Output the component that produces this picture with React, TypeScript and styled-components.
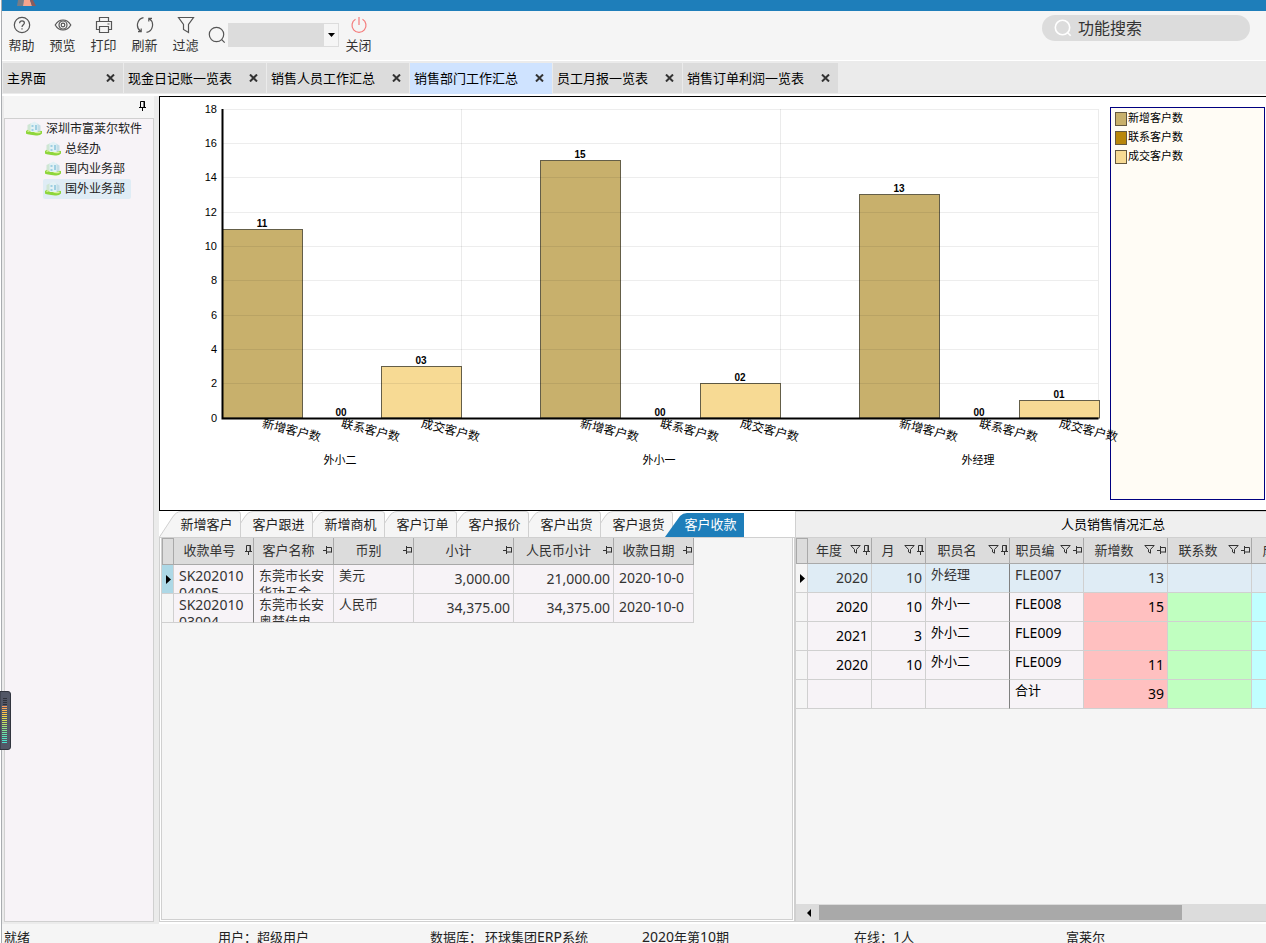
import React from 'react';
import styled, { createGlobalStyle, css } from 'styled-components';

const GlobalStyle = createGlobalStyle`
  *, *::before, *::after { box-sizing: border-box; }
  body {
    margin: 0;
    background: #fff;
    color: #222;
    font: 13px/18px 'Noto Sans CJK SC', sans-serif;
  }
  button, input, select { font: inherit; color: inherit; }
`;

const Shell = styled.div`
  height: 100vh;
  display: flex;
  flex-direction: column;
  overflow: hidden;
  margin-left: 1px;
  border-left: 1px solid #a9acb0;
`;

const TitleBar = styled.header`
  flex: none;
  height: 11px;
  padding-left: 14px;
  background: #1e7eba;
  svg { display: block; }
`;

const Toolbar = styled.div`
  flex: none;
  height: 50px;
  display: flex;
  align-items: flex-start;
  background: #f5f5f5;
  border-bottom: 1px solid #fff;
`;

const ToolButton = styled.button`
  width: 41px;
  height: 48px;
  padding: 5px 2px 0 0;
  border: 0;
  background: none;
  display: flex;
  flex-direction: column;
  align-items: center;
  gap: 2px;
  white-space: nowrap;
  color: #333;
`;

const QuickFind = styled.div`
  display: flex;
  align-items: center;
  gap: 2px;
  padding: 12px 0 0 1px;
`;

const Combo = styled.label`
  position: relative;
  display: flex;
  svg { position: absolute; right: 0; top: 0; pointer-events: none; }
`;

const ComboSelect = styled.select`
  appearance: none;
  width: 111px;
  height: 24px;
  padding: 0 16px 0 4px;
  border: 1px solid #dcdcdc;
  border-radius: 0;
  background: #dcdcdc;
`;

const FeatureSearch = styled.label`
  display: flex;
  align-items: center;
  gap: 6px;
  width: 208px;
  height: 26px;
  margin: 4px 16px 0 auto;
  padding: 0 14px 0 12px;
  border-radius: 13px;
  background: #dcdcdc;
  svg { flex: none; }
`;

const FeatureInput = styled.input`
  min-width: 0;
  flex: 1;
  height: 26px;
  padding: 0 0 2px;
  border: 0;
  outline: 0;
  background: none;
  font-size: 16px;
  &::placeholder { color: #333; opacity: 1; }
`;

const PageTabs = styled.nav`
  flex: none;
  display: flex;
  gap: 1px;
  height: 35px;
  padding: 2px 0 1px 1px;
  background: #ebebeb;
  border-bottom: 2px solid #fff;
`;

const PageTab = styled.div<{ $active?: boolean }>`
  display: flex;
  align-items: center;
  justify-content: space-between;
  gap: 13px;
  height: ${p => (p.$active ? 31 : 30)}px;
  min-width: 120px;
  padding: 0 4px ${p => (p.$active ? 1 : 0)}px;
  background: ${p => (p.$active ? '#cfe3ff' : '#dcdcdc')};
`;

const PlainButton = styled.button`
  display: flex;
  padding: 0;
  border: 0;
  background: none;
  color: #000;
  white-space: nowrap;
`;

const CloseButton = styled(PlainButton)`
  padding: 4px;
`;

const Workspace = styled.div`
  flex: 1;
  min-height: 0;
  display: flex;
  background: #ebebeb;
`;

const Sidebar = styled.aside`
  flex: none;
  width: 157px;
  padding: 0 5px 2px 2px;
  display: flex;
  flex-direction: column;
`;

const SidebarHead = styled.div`
  flex: none;
  display: flex;
  justify-content: flex-end;
  align-items: center;
  height: 22px;
  padding: 0 8px 2px 0;
  background: #f5f5f5;
`;

const Tree = styled.ul`
  flex: 1;
  margin: 0;
  padding: 0;
  list-style: none;
  background: #f7f3f7;
  border: 1px solid #d0d0d0;
  font-size: 12px;
`;

const TreeItem = styled.li<{ $level: number }>`
  display: flex;
  padding-left: ${p => 19 + p.$level * 19}px;
`;

const TreeLabel = styled.button<{ $selected?: boolean }>`
  display: flex;
  align-items: center;
  gap: 4px;
  height: 20px;
  padding: 0 6px 2px 2px;
  border: 0;
  border-radius: 2px;
  white-space: nowrap;
  background: ${p => (p.$selected ? '#dfecf5' : 'none')};
`;

const Main = styled.main`
  flex: 1;
  min-width: 0;
  display: flex;
  flex-direction: column;
  background: #fff;
`;

const ChartPanel = styled.section`
  flex: none;
  display: flex;
  justify-content: space-between;
  height: 415px;
  border: 1px solid #000;
  border-right: 0;
  overflow: hidden;
  svg { display: block; flex: none; position: relative; overflow: visible; }
`;

const Legend = styled.ul`
  flex: none;
  width: 155px;
  margin: 10px 1px 10px 0;
  padding: 1px 4px;
  list-style: none;
  border: 1px solid #000080;
  background: #fffcf5;
  color: #000;
  font-size: 11px;
`;

const LegendItem = styled.li`
  display: flex;
  align-items: flex-start;
  gap: 1px;
  height: 19px;
  line-height: 16px;
`;

const Swatch = styled.span<{ $color: string }>`
  width: 12px;
  height: 14px;
  margin-top: 3px;
  border: 1px solid #645840;
  background: ${p => p.$color};
`;

const Lower = styled.div`
  flex: 1;
  min-height: 0;
  display: flex;
`;

const DetailPanel = styled.section`
  flex: none;
  width: 636px;
  display: flex;
  flex-direction: column;
  padding-bottom: 2px;
`;

const DetailTabs = styled.div`
  flex: none;
  display: flex;
  height: 26px;
`;

const DetailTab = styled.button<{ $order: number; $active?: boolean }>`
  position: relative;
  z-index: ${p => p.$order};
  flex: none;
  width: 82px;
  height: 26px;
  margin-right: -10px;
  padding: 0 0 0 13px;
  border: 0;
  background: none;
  color: ${p => (p.$active ? '#fff' : '#222')};
  svg { position: absolute; left: 0; top: 0; z-index: -1; }
`;

const DetailFrame = styled.div`
  flex: 1;
  min-height: 0;
  border: 1px solid #d0d0d0;
  padding: 0 1px 1px;
  background: #fff;
`;

const DetailBody = styled.div`
  height: 100%;
  border: 1px solid #d0d0d0;
  border-top: 0;
  background: #f5f5f5;
  overflow: hidden;
`;

const SummaryPanel = styled.section`
  flex: 1;
  min-width: 0;
  display: flex;
  flex-direction: column;
  border: solid #d0d0d0;
  border-width: 1px 0 1px 1px;
  margin-bottom: 2px;
  background: #f5f5f5;
`;

const SummaryTitle = styled.h2`
  flex: none;
  height: 26px;
  margin: 0;
  padding-left: 164px;
  border-bottom: 1px solid #d0d0d0;
  background: #efefef;
  color: #000;
  font-size: 13px;
  line-height: 24px;
  font-weight: 400;
  text-align: center;
`;

const GridScroll = styled.div`
  flex: 1;
  min-height: 0;
  overflow: hidden;
`;

const Grid = styled.table<{ $w: number }>`
  width: ${p => p.$w}px;
  table-layout: fixed;
  border-collapse: separate;
  border-spacing: 0;
`;

const HeadCell = styled.th<{ $w: number; $h: number; $box?: boolean }>`
  width: ${p => p.$w}px;
  height: ${p => p.$h}px;
  padding: 0 1px 2px 3px;
  border: 1px solid #a9a9a9;
  border-width: ${p => (p.$box ? '1px' : '0 1px 1px 0')};
  background: #dcdcdc;
  color: #333;
  font-weight: 400;
`;

const HeadContent = styled.div`
  display: flex;
  align-items: center;
  gap: 3px;
  white-space: nowrap;
  overflow: hidden;
`;

const HeadText = styled.span`
  flex: 1;
  text-align: center;
`;

const HeadPins = styled.span`
  flex: none;
  display: flex;
  align-items: center;
  gap: 2px;
`;

type CellProps = { $bg?: string; $frozen?: boolean; $align?: 'top' | 'num' | 'mid'; $latin?: boolean; $dark?: boolean };

const Cell = styled.td<CellProps>`
  padding: 0;
  border: solid #d0d0d0;
  border-width: 0 1px 1px 0;
  ${p => p.$frozen && css`border-right-color: #808080;`}
  background: ${p => p.$bg ?? '#f7f3f7'};
  color: ${p => (p.$dark ? '#000' : '#333')};
`;

const CellText = styled.div<CellProps>`
  height: 28px;
  padding: 1px 4px 0 5px;
  overflow: hidden;
  line-height: 17px;
  word-break: break-all;
  ${p => p.$latin && css`font: 14px/17px 'Noto Sans', sans-serif; padding-top: 2px;`}
  ${p => p.$align === 'num' && css`padding: 0 3px; line-height: 28px; text-align: right;`}
  ${p => p.$align === 'mid' && css`line-height: 26px; padding-top: 0; white-space: nowrap;`}
`;

const MarkerCell = styled.td<{ $on?: boolean }>`
  padding: 0 0 0 1px;
  border: solid #d0d0d0;
  border-width: 0 1px 1px 0;
  background: ${p => (p.$on ? '#add8e6' : '#f5f5f5')};
  svg { display: block; margin: auto; }
`;

const ScrollTrack = styled.div`
  flex: none;
  display: flex;
  align-items: center;
  height: 17px;
  padding-left: 11px;
  background: #dcdcdc;
`;

const ScrollThumb = styled.div`
  width: 79%;
  height: 15px;
  margin-left: 8px;
  background: #a9a9a9;
`;

const StatusBar = styled.footer`
  flex: none;
  display: grid;
  grid-template-columns: 214px repeat(4, 212px) 1fr;
  height: 19px;
  padding-left: 2px;
  background: #f5f5f5;
  color: #222;
  line-height: 26px;
  white-space: nowrap;
  overflow: hidden;
`;

const StatusItem = styled.span``;

const Latin = styled.span`
  font-family: 'Noto Sans', sans-serif;
  font-size: 14px;
`;

const Gauge = styled.div`
  position: absolute;
  left: 0;
  top: 691px;
  z-index: 20;
  svg { display: block; }
`;

type IconName = 'help' | 'preview' | 'print' | 'refresh' | 'filter' | 'close';

const iconShapes: Record<IconName, React.ReactNode> = {
  help: (
    <>
      <circle cx="9" cy="9" r="7.7" />
      <path d="M6.6 7.3C6.6 5.6 7.6 4.8 9 4.8s2.4.9 2.4 2.2c0 1.6-2.4 2-2.4 4M9 12.2v1.3" />
    </>
  ),
  preview: (
    <>
      <path d="M1.2 9C3 5.9 5.8 4 9 4s6 1.900 7.800 5c-1.800 3.100-4.600 5-7.800 5S3 12.100 1.200 9z" />
      <circle cx="9" cy="9" r="4" />
      <circle cx="9" cy="9" r="1.800" />
    </>
  ),
  print: <path d="M4.500 5.500v-4h9v4M4.500 13.500h-3v-8h15v8h-3M4.500 10.500h9v6h-9zM12.500 8h2" />,
  refresh: <path d="M7.500 1.600A7.600 7.600 0 0 0 4.600 15.200M2 15.700h3.200v-3.200M10.500 16.400A7.600 7.600 0 0 0 13.400 2.800M16 2.300h-3.200v3.200" />,
  filter: <path d="M1.500 1.500h15l-5 7v8l-5-3v-5z" />,
  close: <path d="M5.500 3.300a7 7 0 1 0 7 0M9 1v8" />,
};

const ToolIcon = ({ name }: { name: IconName }) => (
  <svg width="18" height="18" viewBox="0 0 18 18" fill="none" stroke={name === 'close' ? '#f47c7c' : '#555'} strokeWidth="1.200" aria-hidden="true">
    {iconShapes[name]}
  </svg>
);

const SearchIcon = ({ color, width }: { color: string; width: number }) => (
  <svg width="18" height="18" viewBox="0 0 18 18" fill="none" stroke={color} strokeWidth={width} aria-hidden="true">
    <circle cx="8.500" cy="8.500" r="7.200" />
    <path d="M13.700 13.700l3 3" />
  </svg>
);

const CrossIcon = () => (
  <svg width="9" height="8" viewBox="0 0 9 8" fill="none" stroke="#333" strokeWidth="2" aria-hidden="true">
    <path d="M1 .5l7 7M8 .5l-7 7" />
  </svg>
);

const PinIcon = ({ side, color = '#333' }: { side?: boolean; color?: string }) =>
  side ? (
    <svg width="9" height="8" viewBox="0 0 9 8" fill="none" stroke={color} aria-hidden="true">
      <path d="M0 4.500h3M3.500 0v8M3.500 1.500h5v5M3.500 6h5" />
    </svg>
  ) : (
    <svg width="7" height="10" viewBox="0 0 7 10" fill="none" stroke={color} aria-hidden="true">
      <path d="M1.500 6v-5.500h4v5.500M5 0v6M0 6.500h7M3.500 7v3" />
    </svg>
  );

const FunnelIcon = () => (
  <svg width="11" height="9" viewBox="0 0 11 9" fill="none" stroke="#333" aria-hidden="true">
    <path d="M.8 .5h9.400l-3.700 4v3.700l-2-1.200v-2.500z" />
  </svg>
);

const MarkerIcon = () => (
  <svg width="5" height="9" viewBox="0 0 5 9" aria-hidden="true">
    <path d="M0 0l5 4.500l-5 4.500z" fill="#000" />
  </svg>
);

const OrgIcon = () => (
  <svg width="16" height="15" viewBox="0 0 16 15" aria-hidden="true">
    <path d="M0 10Q3 7 8 8.500T16 10V12.500Q14 15 10 14.500Q6 14 3 13.500T0 12.500z" fill="#8ed63c" />
    <path d="M1.500 10.500Q5 8.500 8 10.500T14.500 11" stroke="#d9f09b" strokeWidth="1.400" fill="none" />
    <path d="M1.500 4l4-2v8l-4-1z" fill="#cfe6d4" />
    <path d="M11 2.500l3.500 2v5.500l-3.500 1z" fill="#c3dde6" />
    <path d="M4.500 2.500L8.500 .5l3 2V11h-7z" fill="#e2f1f5" />
    <path d="M5.500 4h2v2h-2zM9 4h2v5h-2zM5.500 8h2v2h-2z" fill="#9fcfe2" />
  </svg>
);

const tools: [IconName, string][] = [
  ['help', '帮助'], ['preview', '预览'], ['print', '打印'], ['refresh', '刷新'], ['filter', '过滤'],
];

const pageTabs = ['主界面', '现金日记账一览表', '销售人员工作汇总', '销售部门工作汇总', '员工月报一览表', '销售订单利润一览表'];

const departments = [
  { name: '深圳市富莱尔软件', level: 0 },
  { name: '总经办', level: 1 },
  { name: '国内业务部', level: 1 },
  { name: '国外业务部', level: 1, selected: true },
];

const series = [
  { name: '新增客户数', color: '#c8b06c' },
  { name: '联系客户数', color: '#b8860b' },
  { name: '成交客户数', color: '#f7da94' },
];

const people = [
  { name: '外小二', values: [11, 0, 3] },
  { name: '外小一', values: [15, 0, 2] },
  { name: '外经理', values: [13, 0, 1] },
];

const plot = { left: 62, right: 939, top: 12, bottom: 321, max: 18 };
const yOf = (v: number) => Math.floor(plot.bottom - (v * (plot.bottom - plot.top)) / plot.max) + 0.5;
const slot = (plot.right - plot.left) / 11;

const BarChart = () => (
  <svg width="950" height="413" viewBox="0 0 950 413" role="img" aria-label="客户数">
    <g stroke="#ebebeb">
      {[0, 1, 2].map(i => {
        const x = Math.floor(plot.left + slot * (4 * i + 3)) + (i === 2 ? -0.5 : 0.5);
        return <line key={i} x1={x} x2={x} y1={plot.top} y2={plot.bottom} />;
      })}
    </g>
    <g fontFamily="Liberation Sans, sans-serif" fontSize="11" textAnchor="end" fill="#000">
      {[0, 2, 4, 6, 8, 10, 12, 14, 16, 18].map(v => (
        <text key={v} x="57" y={yOf(v) + 3.5}>{v}</text>
      ))}
    </g>
    {people.map((person, i) =>
      person.values.map((value, j) => {
        const x = Math.floor(plot.left + slot * (4 * i + j)) + 0.5;
        return (
          <g key={`${i}-${j}`}>
            {value > 0 && (
              <rect x={x} y={yOf(value)} width="80" height={plot.bottom - yOf(value)} fill={series[j].color} stroke="#645e48" />
            )}
            <text x={x + 39.5} y={yOf(value) - 2.5} textAnchor="middle" fontFamily="Liberation Sans, sans-serif" fontWeight="700" fontSize="10" fill="#000">
              {String(value).padStart(2, '0')}
            </text>
            <text transform={`translate(${x + 39} 330) rotate(14)`} fontSize="12" fill="#000">{series[j].name}</text>
          </g>
        );
      }),
    )}
    {[2, 4, 6, 8, 10, 12, 14, 16, 18].map(v => (
      <line key={v} x1={plot.left} x2={plot.right - 1} y1={yOf(v)} y2={yOf(v)} stroke="#000" strokeOpacity="0.07" />
    ))}
    <path d="M62.500 12V321.500H938.500" fill="none" stroke="#000" strokeWidth="2" />
    {people.map((person, i) => (
      <text key={person.name} x={180 + Math.round(slot * 4 * i)} y="367" textAnchor="middle" fontSize="11" fill="#000">{person.name}</text>
    ))}
  </svg>
);

const detailTabs = ['新增客户', '客户跟进', '新增商机', '客户订单', '客户报价', '客户出货', '客户退货', '客户收款'];

const TabShape = ({ active }: { active: boolean }) => (
  <svg width="82" height="26" viewBox="0 0 82 26" aria-hidden="true">
    {active ? (
      <path d="M2 26L17 5Q20 2 24 2H81V26z" fill="#1e7eba" />
    ) : (
      <path d="M.5 26L13 7Q17 .5 22 .5H79Q81.500 .5 81.500 3V26" fill="#f5f5f5" stroke="#d0d0d0" />
    )}
  </svg>
);

const MARKER_WIDTH = 12;
const gridWidth = (columns: { width: number }[]) => columns.reduce((sum, c) => sum + c.width, MARKER_WIDTH);

const receiptColumns = [
  { title: '收款单号', width: 80, side: false },
  { title: '客户名称', width: 80, side: true },
  { title: '币别', width: 80, side: true },
  { title: '小计', width: 100, side: true },
  { title: '人民币小计', width: 100, side: true },
  { title: '收款日期', width: 80, side: true },
];

const receipts = [
  { no: 'SK20201004005', customer: '东莞市长安华功五金', currency: '美元', amount: '3,000.00', rmb: '21,000.00', date: '2020-10-0' },
  { no: 'SK20201003004', customer: '东莞市长安奥楚佳电', currency: '人民币', amount: '34,375.00', rmb: '34,375.00', date: '2020-10-0' },
];

const ReceiptGrid = () => (
  <Grid $w={gridWidth(receiptColumns)}>
    <thead>
      <tr>
        <HeadCell $w={MARKER_WIDTH} $h={27} $box aria-label="当前行" />
        {receiptColumns.map(c => (
          <HeadCell key={c.title} $w={c.width} $h={27}>
            <HeadContent>
              <HeadText>{c.title}</HeadText>
              <HeadPins><PinIcon side={c.side} /></HeadPins>
            </HeadContent>
          </HeadCell>
        ))}
      </tr>
    </thead>
    <tbody>
      {receipts.map((r, i) => (
        <tr key={r.no}>
          <MarkerCell $on={i === 0}>{i === 0 && <MarkerIcon />}</MarkerCell>
          <Cell $frozen><CellText $latin>{r.no}</CellText></Cell>
          <Cell><CellText>{r.customer}</CellText></Cell>
          <Cell><CellText>{r.currency}</CellText></Cell>
          <Cell><CellText $latin $align="num">{r.amount}</CellText></Cell>
          <Cell><CellText $latin $align="num">{r.rmb}</CellText></Cell>
          <Cell><CellText $latin $align="mid">{r.date}</CellText></Cell>
        </tr>
      ))}
    </tbody>
  </Grid>
);

const summaryColumns = [
  { title: '年度', width: 64, side: false },
  { title: '月', width: 54, side: false },
  { title: '职员名', width: 84, side: false },
  { title: '职员编', width: 74, side: true },
  { title: '新增数', width: 84, side: true },
  { title: '联系数', width: 84, side: true },
  { title: '成交数', width: 84, side: true },
];

const summaryRows = [
  { year: '2020', month: '10', name: '外经理', code: 'FLE007', added: '13' },
  { year: '2020', month: '10', name: '外小一', code: 'FLE008', added: '15' },
  { year: '2021', month: '3', name: '外小二', code: 'FLE009', added: '' },
  { year: '2020', month: '10', name: '外小二', code: 'FLE009', added: '11' },
  { year: '', month: '', name: '', code: '合计', added: '39' },
];

const SummaryGrid = () => (
  <Grid $w={gridWidth(summaryColumns)}>
    <thead>
      <tr>
        <HeadCell $w={MARKER_WIDTH} $h={26} $box aria-label="当前行" />
        {summaryColumns.map(c => (
          <HeadCell key={c.title} $w={c.width} $h={26}>
            <HeadContent>
              <HeadText>{c.title}</HeadText>
              <HeadPins><FunnelIcon /><PinIcon side={c.side} /></HeadPins>
            </HeadContent>
          </HeadCell>
        ))}
      </tr>
    </thead>
    <tbody>
      {summaryRows.map((r, i) => {
        const current = i === 0;
        const base = current ? '#dfecf5' : '#f7f3f7';
        const dark = !current;
        return (
          <tr key={i}>
            <MarkerCell>{current && <MarkerIcon />}</MarkerCell>
            <Cell $bg={base} $dark={dark}><CellText $latin $align="num">{r.year}</CellText></Cell>
            <Cell $bg={base} $dark={dark}><CellText $latin $align="num">{r.month}</CellText></Cell>
            <Cell $bg={base} $dark={dark} $frozen><CellText>{r.name}</CellText></Cell>
            <Cell $bg={base} $dark={dark}><CellText $latin={r.code !== '合计'}>{r.code}</CellText></Cell>
            <Cell $bg={current ? base : '#ffc0c0'} $dark={dark}><CellText $latin $align="num">{r.added}</CellText></Cell>
            <Cell $bg={current ? base : '#c0ffc0'} />
            <Cell $bg={current ? base : '#c0ffff'} />
          </tr>
        );
      })}
    </tbody>
  </Grid>
);

const gaugeBars = ['#2e303a', '#2e303a', '#2e303a', '#2e303a', '#ff9d5c', '#ffa954', '#ffb64e', '#ffc148', '#fbcc44', '#f1d545', '#e4dc4b', '#d5e154', '#c4e35f', '#b2e46b', '#a0e478', '#8fe485', '#7fe492', '#71e49f', '#65e4ab', '#5be4b6', '#54e4c0', '#4fe3c8', '#4ce2cf'];

export default function App() {
  return (
    <>
      <GlobalStyle />
      <Shell>
        <TitleBar>
          <svg width="22" height="6" viewBox="0 0 22 6" aria-hidden="true">
            <path d="M2 0H8L7 6H1z" fill="#777c86" />
            <path d="M8 0H14L16 6H7z" fill="#f6a58d" />
            <path d="M14 0H17L20 6H16z" fill="#8c5b5b" />
          </svg>
        </TitleBar>
        <Toolbar>
          {tools.map(([name, label]) => (
            <ToolButton key={name}><ToolIcon name={name} />{label}</ToolButton>
          ))}
          <QuickFind>
            <SearchIcon color="#555" width={1.2} />
            <Combo>
              <ComboSelect aria-label="查找"><option value="" /></ComboSelect>
              <svg width="15" height="24" viewBox="0 0 15 24" aria-hidden="true">
                <path d="M0 1h14v22H0z" fill="#f5f5f5" />
                <path d="M4 10h7l-3.500 4z" fill="#000" />
              </svg>
            </Combo>
          </QuickFind>
          <ToolButton><ToolIcon name="close" />关闭</ToolButton>
          <FeatureSearch>
            <SearchIcon color="#fff" width={1.6} />
            <FeatureInput placeholder="功能搜索" aria-label="功能搜索" />
          </FeatureSearch>
        </Toolbar>
        <PageTabs>
          {pageTabs.map(t => (
            <PageTab key={t} $active={t === '销售部门工作汇总'}>
              <PlainButton>{t}</PlainButton>
              <CloseButton aria-label="关闭标签"><CrossIcon /></CloseButton>
            </PageTab>
          ))}
        </PageTabs>
        <Workspace>
          <Sidebar>
            <SidebarHead>
              <PlainButton aria-label="固定"><PinIcon color="#000" /></PlainButton>
            </SidebarHead>
            <Tree>
              {departments.map(d => (
                <TreeItem key={d.name} $level={d.level}>
                  <TreeLabel $selected={d.selected}><OrgIcon />{d.name}</TreeLabel>
                </TreeItem>
              ))}
            </Tree>
          </Sidebar>
          <Main>
            <ChartPanel>
              <BarChart />
              <Legend>
                {series.map(s => (
                  <LegendItem key={s.name}><Swatch $color={s.color} />{s.name}</LegendItem>
                ))}
              </Legend>
            </ChartPanel>
            <Lower>
              <DetailPanel>
                <DetailTabs>
                  {detailTabs.map((t, i) => {
                    const active = t === '客户收款';
                    return (
                      <DetailTab key={t} $order={active ? 10 : 8 - i} $active={active}>
                        <TabShape active={active} />{t}
                      </DetailTab>
                    );
                  })}
                </DetailTabs>
                <DetailFrame>
                  <DetailBody><ReceiptGrid /></DetailBody>
                </DetailFrame>
              </DetailPanel>
              <SummaryPanel>
                <SummaryTitle>人员销售情况汇总</SummaryTitle>
                <GridScroll><SummaryGrid /></GridScroll>
                <ScrollTrack>
                  <svg width="4" height="8" viewBox="0 0 4 8" aria-hidden="true"><path d="M4 0v8L0 4z" fill="#000" /></svg>
                  <ScrollThumb />
                </ScrollTrack>
              </SummaryPanel>
            </Lower>
          </Main>
        </Workspace>
        <StatusBar>
          <StatusItem>就绪</StatusItem>
          <StatusItem>用户：超级用户</StatusItem>
          <StatusItem>数据库： 环球集团<Latin>ERP</Latin>系统</StatusItem>
          <StatusItem><Latin>2020</Latin>年第<Latin>10</Latin>期</StatusItem>
          <StatusItem>在线：<Latin>1</Latin>人</StatusItem>
          <StatusItem>富莱尔</StatusItem>
        </StatusBar>
      </Shell>
      <Gauge>
        <svg width="11" height="59" viewBox="0 0 11 59" aria-hidden="true">
          <path d="M0 .5H8Q10.500 .5 10.500 3V56Q10.500 58.500 8 58.500H0z" fill="#525766" stroke="#31343e" />
          {gaugeBars.map((c, i) => (
            <rect key={i} x={i < 4 ? 3 : 2} y={7 + i * 2} width={i < 4 ? 4 : 5} height="1" fill={c} />
          ))}
        </svg>
      </Gauge>
    </>
  );
}
